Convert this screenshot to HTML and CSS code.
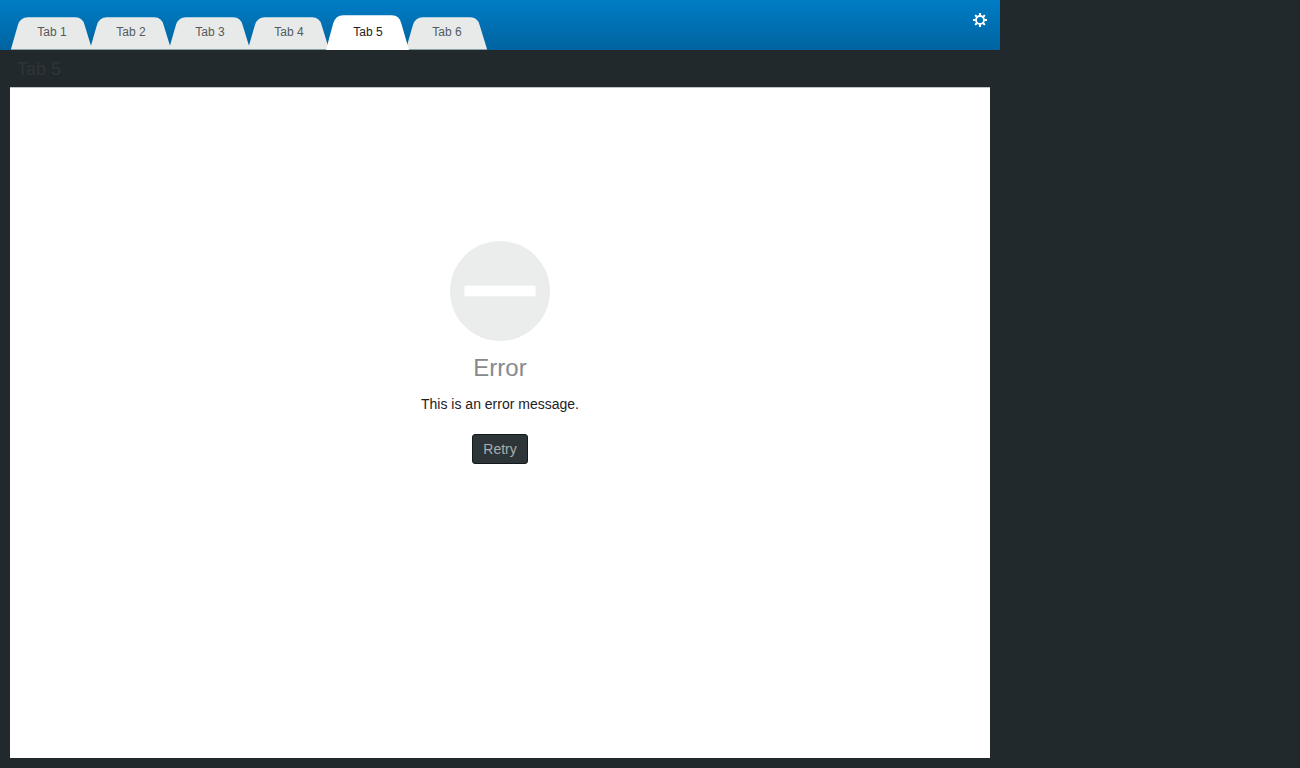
FILE: index.html
```html
<!DOCTYPE html>
<html lang="en">
<head>
<meta charset="utf-8">
<title>Tab 5</title>
<link rel="stylesheet" href="styles.css">
</head>
<body>
<svg width="0" height="0" class="defs" aria-hidden="true">
  <symbol id="tab-shape" viewBox="0 0 82 32" preserveAspectRatio="none">
    <path d="M0 32 L7 8 Q9.500 0.300 17 0.300 H65 Q72.500 0.300 74.500 8 L82 32 Z"/>
  </symbol>
</svg>
<div class="app">
  <header class="topbar">
    <nav class="tabs" role="tablist">
      <button class="tab" role="tab"><svg class="tab-bg" aria-hidden="true"><use href="#tab-shape"/></svg><span class="tab-label">Tab 1</span></button>
      <button class="tab" role="tab"><svg class="tab-bg" aria-hidden="true"><use href="#tab-shape"/></svg><span class="tab-label">Tab 2</span></button>
      <button class="tab" role="tab"><svg class="tab-bg" aria-hidden="true"><use href="#tab-shape"/></svg><span class="tab-label">Tab 3</span></button>
      <button class="tab" role="tab"><svg class="tab-bg" aria-hidden="true"><use href="#tab-shape"/></svg><span class="tab-label">Tab 4</span></button>
      <button class="tab active" role="tab" aria-selected="true"><svg class="tab-bg" aria-hidden="true"><use href="#tab-shape"/></svg><span class="tab-label">Tab 5</span></button>
      <button class="tab" role="tab"><svg class="tab-bg" aria-hidden="true"><use href="#tab-shape"/></svg><span class="tab-label">Tab 6</span></button>
    </nav>
    <button class="settings" aria-label="Settings">
      <svg width="14" height="14" viewBox="-7 -7 14 14" aria-hidden="true">
        <circle r="4" fill="none" stroke="currentColor" stroke-width="1.8"/>
        <path d="M0-7V-4.500M0 7V4.500M-7 0H-4.500M7 0H4.500M-4.900-4.900L-3.200-3.200M4.900-4.900L3.200-3.200M-4.900 4.900L-3.200 3.200M4.900 4.900L3.200 3.200" fill="none" stroke="currentColor" stroke-width="2"/>
      </svg>
    </button>
  </header>
  <h1 class="title">Tab 5</h1>
  <main class="panel">
    <svg class="error-icon" width="100" height="100" viewBox="0 0 100 100" aria-hidden="true">
      <circle cx="50" cy="50" r="50" fill="#ebeded"/>
      <rect x="14.500" y="44.700" width="71" height="10.600" fill="#fff"/>
    </svg>
    <h2 class="error-title">Error</h2>
    <p class="error-text">This is an error message.</p>
    <button class="retry">Retry</button>
  </main>
</div>
</body>
</html>
```

FILE: styles.css
```css
* {
  box-sizing: border-box;
}

body {
  margin: 0;
  background: #22292c;
  color: #1d2122;
  font-family: "Liberation Sans", Arial, sans-serif;
  font-size: 14px;
  line-height: 20px;
}

button {
  margin: 0;
  font: inherit;
  cursor: pointer;
}

.defs {
  position: absolute;
}

.app {
  display: flex;
  flex-direction: column;
  max-width: 1000px;
  min-height: 100vh;
  padding-bottom: 10px;
}

.topbar {
  display: flex;
  justify-content: space-between;
  align-items: flex-start;
  height: 50px;
  padding: 0 13px 0 12px;
  background: linear-gradient(#007dc6, #0063a0);
}

.tabs {
  display: flex;
  align-self: flex-end;
}

.tab {
  position: relative;
  width: 79px;
  height: 35px;
  padding: 0 0 0 1px;
  border: 0;
  background: none;
  color: #555a5c;
  font-size: 12px;
  line-height: 35px;
}

.tab-bg {
  position: absolute;
  left: -1px;
  bottom: 0;
  width: calc(100% + 2px);
  height: 33px;
  fill: #e8eae9;
  border-bottom: 1px solid #8ba0ad;
}

.tab-label {
  position: relative;
}

.tab.active {
  z-index: 1;
  color: #1d2122;
}

.active .tab-bg {
  left: -2px;
  width: calc(100% + 4px);
  height: 35px;
  fill: #fff;
  border-bottom: 0;
}

.settings {
  display: flex;
  padding: 13px 0;
  border: 0;
  background: none;
  color: #fff;
}

.title {
  margin: 0;
  padding: 8px 17px 7px;
  color: #2d3538;
  font-size: 18px;
  font-weight: normal;
  line-height: 22px;
}

.panel {
  display: flex;
  flex: 1;
  flex-direction: column;
  align-items: center;
  margin: 0 10px;
  padding: 153px 20px 20px;
  border-top: 1px solid #bdc3c6;
  background: #fff;
}

.error-title {
  margin: 12px 0;
  color: #868a8c;
  font-size: 24px;
  font-weight: normal;
  line-height: 29px;
}

.error-text {
  margin: 0 0 20px;
}

.retry {
  height: 30px;
  padding: 0 10px;
  border: 1px solid #14191b;
  border-radius: 3px;
  background: #2d3538;
  color: #aaacad;
}
```
